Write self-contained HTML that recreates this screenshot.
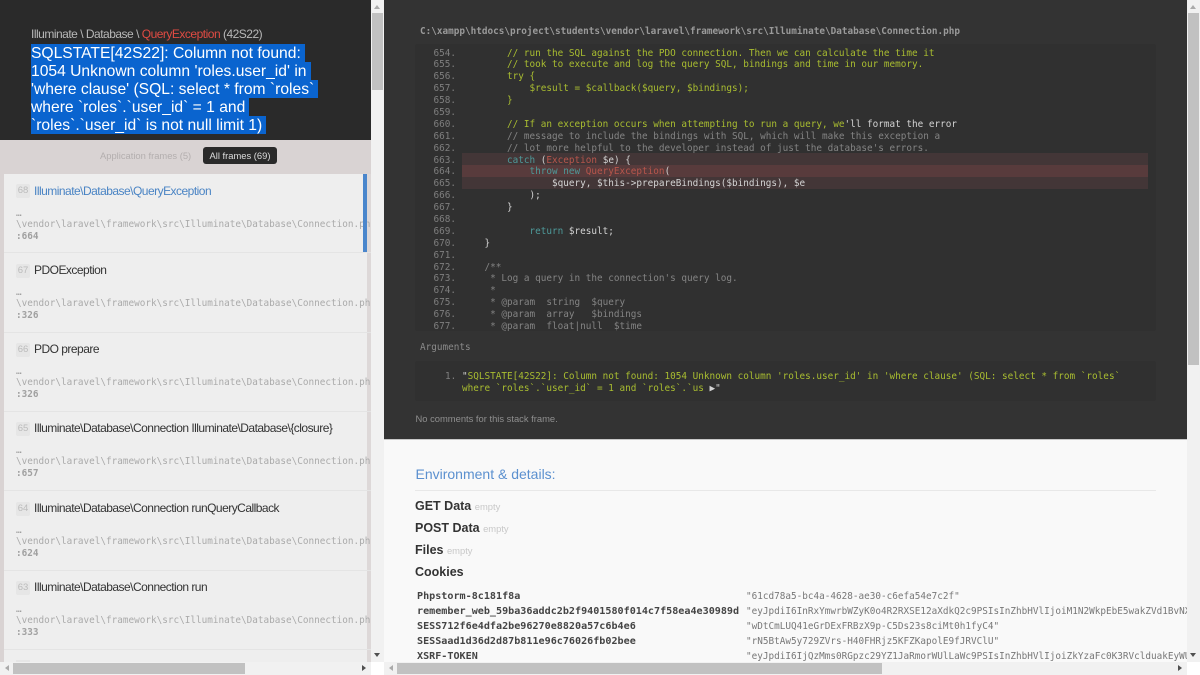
<!DOCTYPE html>
<html><head><meta charset="utf-8"><title>QueryException</title>
<style>
html,body{margin:0;padding:0;width:1200px;height:675px;overflow:hidden;background:#f9f9f9}
#w{position:relative;width:1200px;height:675px;overflow:hidden;font-family:"Liberation Sans",sans-serif;filter:blur(.3px)}
.a{position:absolute}
.m{font-family:"DejaVu Sans Mono","Liberation Mono",monospace;font-size:9.35px;white-space:pre}
.sel{position:absolute;left:31px;height:18px;line-height:18px;font-size:15.65px;white-space:pre}
.sel span{background:#0a64cf;color:#fff;display:inline-block;height:17px;padding:1px 4px 0 0;line-height:18px;overflow:hidden}
.fr{position:absolute;left:4px;width:367px;height:79px;border-bottom:1px solid #e4e4e4;overflow:hidden}
.idx{position:absolute;left:12px;top:11px;width:14px;height:14px;line-height:14px;background:#e6e6e6;color:#bbb;font-size:9.5px;text-align:center;border-radius:2px}
.tt{position:absolute;left:30px;top:9px;font-size:12px;line-height:16px;color:#333;white-space:pre;letter-spacing:-.52px}
.dots{position:absolute;left:12px;top:34px;color:#999;font-family:"DejaVu Sans Mono",monospace;font-size:9.35px;line-height:12px}
.pth{position:absolute;left:12px;top:45px;color:#aaa;line-height:12px}
.ln{position:absolute;left:12px;top:57px;color:#a0a0a0;font-weight:bold;line-height:12px}
.g{color:#a9bd30}.d{color:#848484}.w{color:#d4d4d4}.t{color:#4e9a9a}.r{color:#b9564c}
.h{position:absolute;left:415px;font-size:12.5px;font-weight:bold;color:#333;line-height:16px;white-space:pre}
.h i{font-style:normal;font-weight:normal;font-size:9.4px;color:#c8c8c8}
.ck{position:absolute;left:417px;font-family:"DejaVu Sans Mono",monospace;font-weight:bold;font-size:10.1px;color:#444;line-height:14px;white-space:pre}
.cv{position:absolute;left:746px;width:441px;overflow:hidden;color:#777;line-height:14px}
.tri{position:absolute;width:0;height:0;border-style:solid}
</style></head><body><div id="w">

<!-- left column -->
<div class="a" style="left:0;top:0;width:371px;height:140px;background:#2a2a2a"></div>
<div class="a" style="left:31px;top:26px;font-size:12px;line-height:16px;color:#b8b8b8;white-space:pre;letter-spacing:-.5px">Illuminate \ Database \ <span style="color:#e04b43">QueryException</span> (42S22)</div>
<div class="sel" style="top:44px"><span>SQLSTATE[42S22]: Column not found:</span></div>
<div class="sel" style="top:62px"><span>1054 Unknown column 'roles.user_id' in</span></div>
<div class="sel" style="top:80px"><span>'where clause' (SQL: select * from `roles`</span></div>
<div class="sel" style="top:98px"><span>where `roles`.`user_id` = 1 and</span></div>
<div class="sel" style="top:116px"><span>`roles`.`user_id` is not null limit 1)</span></div>

<div class="a" style="left:0;top:140px;width:371px;height:522px;background:#d9d3d3"></div>
<div class="a" style="left:100px;top:148px;font-size:9.4px;line-height:15px;color:#b3aeae;white-space:pre">Application frames (5)</div>
<div class="a" style="left:203px;top:147px;width:74px;height:17px;line-height:17px;background:#2a2a2a;border-radius:3px;color:#ddd;font-size:9.4px;text-align:center;white-space:pre">All frames (69)</div>

<div class="a" style="left:4px;top:174px;width:363px;height:488px;background:#eee"></div>
<div class="a" style="left:367px;top:174px;width:4px;height:488px;background:#ddd8d8"></div>

<div class="fr" style="top:173px"><div class="idx">68</div><div class="tt" style="top:10px;color:#4a84c4">Illuminate\Database\QueryException</div><div class="dots" style="top:35px">…</div><div class="pth m" style="top:46px">\vendor\laravel\framework\src\Illuminate\Database\Connection.php</div><div class="ln m" style="top:58px">:664</div></div>
<div class="a" style="left:363px;top:174px;width:4px;height:78px;background:#4a86cc"></div>

<div class="fr" style="top:253px"><div class="idx">67</div><div class="tt">PDOException</div><div class="dots">…</div><div class="pth m">\vendor\laravel\framework\src\Illuminate\Database\Connection.php</div><div class="ln m">:326</div></div>
<div class="fr" style="top:332px"><div class="idx">66</div><div class="tt">PDO prepare</div><div class="dots">…</div><div class="pth m">\vendor\laravel\framework\src\Illuminate\Database\Connection.php</div><div class="ln m">:326</div></div>
<div class="fr" style="top:411px"><div class="idx">65</div><div class="tt">Illuminate\Database\Connection Illuminate\Database\{closure}</div><div class="dots">…</div><div class="pth m">\vendor\laravel\framework\src\Illuminate\Database\Connection.php</div><div class="ln m">:657</div></div>
<div class="fr" style="top:491px"><div class="idx">64</div><div class="tt">Illuminate\Database\Connection runQueryCallback</div><div class="dots">…</div><div class="pth m">\vendor\laravel\framework\src\Illuminate\Database\Connection.php</div><div class="ln m">:624</div></div>
<div class="fr" style="top:570px"><div class="idx">63</div><div class="tt">Illuminate\Database\Connection run</div><div class="dots">…</div><div class="pth m">\vendor\laravel\framework\src\Illuminate\Database\Connection.php</div><div class="ln m">:333</div></div>
<div class="a" style="left:16px;top:660px;width:14px;height:2px;background:#e6e6e6"></div>

<!-- left scrollbars -->
<div class="a" style="left:371px;top:0;width:13px;height:662px;background:#f1f1f1"></div>
<div class="a" style="left:372px;top:13px;width:11px;height:77px;background:#c1c1c1"></div>
<div class="tri" style="left:374px;top:5px;border-width:0 3.5px 4px;border-color:transparent transparent #aaa"></div>
<div class="tri" style="left:374px;top:653px;border-width:4px 3.5px 0;border-color:#505050 transparent transparent"></div>
<div class="a" style="left:0;top:662px;width:371px;height:13px;background:#f1f1f1"></div>
<div class="a" style="left:13px;top:663px;width:232px;height:11px;background:#c1c1c1"></div>
<div class="tri" style="left:5px;top:665px;border-width:3.5px 4px 3.5px 0;border-color:transparent #aaa transparent transparent"></div>
<div class="tri" style="left:362px;top:665px;border-width:3.5px 0 3.5px 4px;border-color:transparent transparent transparent #505050"></div>
<div class="a" style="left:371px;top:662px;width:13px;height:13px;background:#fff"></div>

<!-- dark panel -->
<div class="a" style="left:384px;top:0;width:803px;height:439px;background:#333"></div>
<div class="a" style="left:384px;top:439px;width:803px;height:1px;background:#c8c8c8"></div>
<div class="a m" style="left:420px;top:26px;line-height:12px;color:#9a9a9a;font-weight:bold">C:\xampp\htdocs\project\students\vendor\laravel\framework\src\Illuminate\Database\Connection.php</div>
<div class="a" style="left:415px;top:44px;width:741px;height:287px;background:#303030;border-radius:2px"></div>
<div class="a" style="left:462px;top:153px;width:686px;height:36px;background:#433637"></div>
<div class="a" style="left:462px;top:165px;width:686px;height:12px;background:#583b3c"></div>

<div class="a m" style="left:433.5px;top:47.5px;height:283.5px;overflow:hidden;line-height:11.89px;color:#7f7f7f">654.
655.
656.
657.
658.
659.
660.
661.
662.
663.
664.
665.
666.
667.
668.
669.
670.
671.
672.
673.
674.
675.
676.
677.</div>
<div class="a m" style="left:462px;top:47.5px;height:283.5px;width:686px;overflow:hidden;line-height:11.89px;color:#d4d4d4"><span class="g">        // run the SQL against the PDO connection. Then we can calculate the time it
        // took to execute and log the query SQL, bindings and time in our memory.
        try {
            $result = $callback($query, $bindings);
        }</span>

<span class="g">        // If an exception occurs when attempting to run a query, we</span><span class="w">'ll format the error</span>
<span class="d">        // message to include the bindings with SQL, which will make this exception a
        // lot more helpful to the developer instead of just the database's errors.</span>
        <span class="t">catch</span> (<span class="r">Exception</span> $e) {
            <span class="t">throw new</span> <span class="r">QueryException</span>(
                $query, $this-&gt;prepareBindings($bindings), $e
            );
        }

            <span class="t">return</span> $result;
    }

<span class="d">    /**
     * Log a query in the connection's query log.
     *
     * @param  string  $query
     * @param  array   $bindings
     * @param  float|null  $time</span></div>

<div class="a m" style="left:420px;top:342px;line-height:12px;color:#8a8a8a">Arguments</div>
<div class="a" style="left:415px;top:361px;width:741px;height:40px;background:#303030;border-radius:2px"></div>
<div class="a m" style="left:445px;top:371px;line-height:12px;color:#7f7f7f">1.</div>
<div class="a m" style="left:462px;top:371px;line-height:12px;color:#a9bd30"><span class="w">"</span>SQLSTATE[42S22]: Column not found: 1054 Unknown column 'roles.user_id' in 'where clause' (SQL: select * from `roles`
where `roles`.`user_id` = 1 and `roles`.`us <span class="w">▶"</span></div>
<div class="a" style="left:415.5px;top:411px;font-size:9.4px;line-height:15px;color:#8f8f8f;white-space:pre">No comments for this stack frame.</div>

<!-- details -->
<div class="a" style="left:415.5px;top:465px;font-size:14px;line-height:18px;color:#5b90cf;white-space:pre">Environment &amp; details:</div>
<div class="a" style="left:415px;top:490px;width:741px;height:1px;background:#e8e8e8"></div>
<div class="h" style="top:498px">GET Data <i>empty</i></div>
<div class="h" style="top:520px">POST Data <i>empty</i></div>
<div class="h" style="top:542px">Files <i>empty</i></div>
<div class="h" style="top:564px">Cookies</div>

<div class="ck" style="top:590px">Phpstorm-8c181f8a</div>
<div class="ck" style="top:605px">remember_web_59ba36addc2b2f9401580f014c7f58ea4e30989d</div>
<div class="ck" style="top:620px">SESS712f6e4dfa2be96270e8820a57c6b4e6</div>
<div class="ck" style="top:635px">SESSaad1d36d2d87b811e96c76026fb02bee</div>
<div class="ck" style="top:650px">XSRF-TOKEN</div>
<div class="cv m" style="top:590px">"61cd78a5-bc4a-4628-ae30-c6efa54e7c2f"</div>
<div class="cv m" style="top:605px">"eyJpdiI6InRxYmwrbWZyK0o4R2RXSE12aXdkQ2c9PSIsInZhbHVlIjoiM1N2WkpEbE5wakZVd1BvNXlMd2</div>
<div class="cv m" style="top:620px">"wDtCmLUQ41eGrDExFRBzX9p-C5Ds23s8ciMt0h1fyC4"</div>
<div class="cv m" style="top:635px">"rN5BtAw5y729ZVrs-H40FHRjz5KFZKapolE9fJRVClU"</div>
<div class="cv m" style="top:650px">"eyJpdiI6IjQzMms0RGpzc29YZ1JaRmorWUlLaWc9PSIsInZhbHVlIjoiZkYzaFc0K3RVclduakEyWUl4Mn</div>

<!-- right scrollbars -->
<div class="a" style="left:1187px;top:0;width:13px;height:662px;background:#f1f1f1"></div>
<div class="a" style="left:1188px;top:13px;width:11px;height:352px;background:#c1c1c1"></div>
<div class="tri" style="left:1190px;top:5px;border-width:0 3.5px 4px;border-color:transparent transparent #aaa"></div>
<div class="tri" style="left:1190px;top:653px;border-width:4px 3.5px 0;border-color:#505050 transparent transparent"></div>
<div class="a" style="left:384px;top:662px;width:803px;height:13px;background:#f1f1f1"></div>
<div class="a" style="left:397px;top:663px;width:485px;height:11px;background:#c1c1c1"></div>
<div class="tri" style="left:389px;top:665px;border-width:3.5px 4px 3.5px 0;border-color:transparent #aaa transparent transparent"></div>
<div class="tri" style="left:1178px;top:665px;border-width:3.5px 0 3.5px 4px;border-color:transparent transparent transparent #505050"></div>
<div class="a" style="left:1187px;top:662px;width:13px;height:13px;background:#fff"></div>
</div></body></html>
